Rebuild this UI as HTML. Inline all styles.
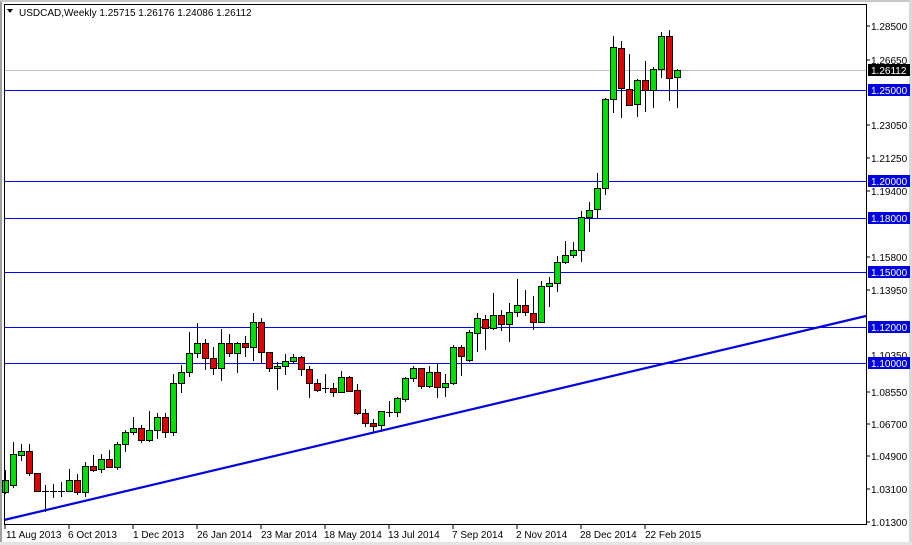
<!DOCTYPE html>
<html><head><meta charset="utf-8"><style>
html,body{margin:0;padding:0;background:#fff;width:912px;height:545px;overflow:hidden}
svg{display:block}
text{font-family:"Liberation Sans",sans-serif;font-size:10px}
</style></head><body>
<svg width="912" height="545" viewBox="0 0 912 545" xmlns="http://www.w3.org/2000/svg" shape-rendering="crispEdges">
<rect x="0" y="0" width="912" height="545" fill="#fff"/>
<rect x="0" y="0" width="2" height="545" fill="#a0a0a0"/>
<rect x="0" y="0" width="912" height="2" fill="#c8c8c8"/>
<rect x="909" y="0" width="3" height="545" fill="#d8d8d8"/>
<rect x="0" y="542" width="912" height="3" fill="#e4e4e4"/>
<line x1="4" y1="70.5" x2="866" y2="70.5" stroke="#c0c0c0"/>
<g stroke="#0000ff" stroke-width="1">
<line x1="4" y1="90.5" x2="866" y2="90.5"/>
<line x1="4" y1="181.5" x2="866" y2="181.5"/>
<line x1="4" y1="218.5" x2="866" y2="218.5"/>
<line x1="4" y1="272.5" x2="866" y2="272.5"/>
<line x1="4" y1="327.5" x2="866" y2="327.5"/>
<line x1="4" y1="363.5" x2="866" y2="363.5"/>
</g>
<g id="c"></g>
<line x1="4" y1="520" x2="866" y2="316" stroke="#0000e0" stroke-width="2.2" shape-rendering="auto"/>
<rect x="4.5" y="4.5" width="862" height="520" fill="none" stroke="#000"/>
<path d="M7 9 L13 9 L10 13 Z" fill="#000"/>
<text x="19" y="16" font-size="10.5">USDCAD,Weekly  1.25715 1.26176 1.24086 1.26112</text>
<g fill="#000">
<text x="871" y="30">1.28500</text>
<text x="871" y="64">1.26650</text>
<text x="871" y="129">1.23050</text>
<text x="871" y="162">1.21250</text>
<text x="871" y="195">1.19400</text>
<text x="871" y="261">1.15800</text>
<text x="871" y="294">1.13950</text>
<text x="871" y="359">1.10350</text>
<text x="871" y="396">1.08550</text>
<text x="871" y="428">1.06700</text>
<text x="871" y="460">1.04900</text>
<text x="871" y="493">1.03100</text>
<text x="871" y="526">1.01300</text>
</g>
<g stroke="#000"><line x1="867" y1="26" x2="870" y2="26"/><line x1="867" y1="60" x2="870" y2="60"/><line x1="867" y1="125" x2="870" y2="125"/><line x1="867" y1="158" x2="870" y2="158"/><line x1="867" y1="191" x2="870" y2="191"/><line x1="867" y1="257" x2="870" y2="257"/><line x1="867" y1="290" x2="870" y2="290"/><line x1="867" y1="392" x2="870" y2="392"/><line x1="867" y1="424" x2="870" y2="424"/><line x1="867" y1="456" x2="870" y2="456"/><line x1="867" y1="489" x2="870" y2="489"/><line x1="867" y1="522" x2="870" y2="522"/></g>
<rect x="868" y="64" width="42" height="12" fill="#000"/><text x="871" y="74" fill="#fff">1.26112</text>
<g fill="#0000e0">
<rect x="868" y="84" width="42" height="12"/><rect x="868" y="175" width="42" height="12"/><rect x="868" y="212" width="42" height="12"/><rect x="868" y="266" width="42" height="12"/><rect x="868" y="321" width="42" height="12"/><rect x="868" y="357" width="42" height="12"/>
</g>
<g fill="#fff">
<text x="871" y="94">1.25000</text><text x="871" y="185">1.20000</text><text x="871" y="222">1.18000</text><text x="871" y="276">1.15000</text><text x="871" y="331">1.12000</text><text x="871" y="367">1.10000</text>
</g>
<g stroke="#000"><line x1="5" y1="525" x2="5" y2="529"/><line x1="69" y1="525" x2="69" y2="529"/><line x1="133" y1="525" x2="133" y2="529"/><line x1="197" y1="525" x2="197" y2="529"/><line x1="261" y1="525" x2="261" y2="529"/><line x1="325" y1="525" x2="325" y2="529"/><line x1="389" y1="525" x2="389" y2="529"/><line x1="453" y1="525" x2="453" y2="529"/><line x1="517" y1="525" x2="517" y2="529"/><line x1="581" y1="525" x2="581" y2="529"/><line x1="645" y1="525" x2="645" y2="529"/></g>
<g fill="#000">
<text x="6" y="538">11 Aug 2013</text><text x="68" y="538">6 Oct 2013</text><text x="133" y="538">1 Dec 2013</text><text x="197" y="538">26 Jan 2014</text><text x="261" y="538">23 Mar 2014</text><text x="324" y="538">18 May 2014</text><text x="388" y="538">13 Jul 2014</text><text x="452" y="538">7 Sep 2014</text><text x="516" y="538">2 Nov 2014</text><text x="580" y="538">28 Dec 2014</text><text x="645" y="538">22 Feb 2015</text>
</g>
</svg>
<script>
var d=[
['g',480,492,470,494],['g',454,485,442,488],['g',451,455,444,461],['r',451,473,444,476],['r',473,491,473,492],
['d',491,491,485,512],['d',491,491,484,498],['d',491,491,482,497],['g',480,491,469,492],['r',480,492,474,495],
['g',466,492,462,497],['r',466,470,455,472],['g',459,469,454,473],['r',459,467,450,468],['g',444,467,442,470],
['g',432,444,430,452],['g',428,432,417,435],['r',428,440,425,443],['g',430,440,411,442],['g',417,430,413,439],
['r',417,432,413,438],['g',383,432,374,436],['g',372,383,365,393],['g',353,372,332,377],['g',343,353,323,358],
['r',343,358,339,370],['r',358,368,347,375],['g',343,368,329,381],['r',343,353,334,357],['g',343,353,342,373],
['r',343,347,336,357],['g',322,347,313,361],['r',322,352,318,363],['r',352,368,352,372],['g',366,368,362,390],
['g',361,366,354,375],['g',357,361,354,363],['r',357,369,356,376],['r',369,383,366,398],['r',383,390,379,392],
['d',388,388,374,393],['r',388,392,383,397],['g',377,392,371,393],['r',377,391,376,392],['r',390,413,384,415],
['r',413,423,409,427],['r',423,426,419,433],['g',411,425,411,432],['d',412,412,401,417],['g',398,412,397,417],
['g',378,399,377,402],['g',368,378,366,382],['r',368,386,368,389],['g',372,386,366,388],['r',372,387,363,398],
['g',383,387,374,397],['g',347,383,345,385],['r',347,356,345,376],['g',332,360,330,362],['g',318,333,313,352],
['r',319,328,315,350],['g',315,328,293,330],['r',315,324,310,331],['g',312,324,303,342],['g',305,312,279,317],
['r',305,312,290,316],['r',313,322,296,330],['g',286,322,281,323],['g',283,286,277,307],['g',262,283,256,292],
['g',255,262,241,264],['g',250,255,242,258],['g',217,250,211,262],['g',210,217,202,232],['g',188,209,173,218],
['g',99,188,98,195],['g',47,99,36,113],['r',48,88,41,118],['r',89,105,54,106],['g',80,104,79,117],
['r',80,90,61,112],['g',69,90,67,108],['g',36,69,32,78],['r',36,78,30,101],['g',70,77,69,108]];
var s='';
for(var i=0;i<d.length;i++){var c=d[i],x=5+8*i;
s+='<line x1="'+(x+0.5)+'" y1="'+c[3]+'" x2="'+(x+0.5)+'" y2="'+c[4]+'" stroke="#000"/>';
if(c[0]=='d'){s+='<line x1="'+(x-3)+'" y1="'+(c[1]+0.5)+'" x2="'+(x+4)+'" y2="'+(c[1]+0.5)+'" stroke="#000"/>';}
else{var h=Math.max(c[2]-c[1],2);s+='<rect x="'+(x-2.5)+'" y="'+(c[1]+0.5)+'" width="6" height="'+h+'" fill="'+(c[0]=='g'?'#00e000':'#e00000')+'" stroke="#000"/>';}}
document.getElementById('c').innerHTML=s;
</script>
</body></html>
